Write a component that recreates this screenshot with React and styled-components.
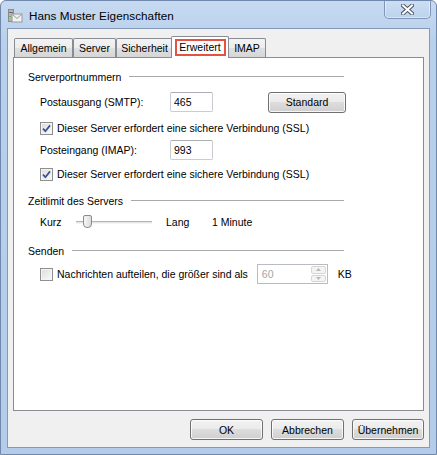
import React, { useState } from 'react'
import styled, { createGlobalStyle } from 'styled-components'

const GlobalStyle = createGlobalStyle`
  html, body { margin: 0; padding: 0; background: #ffffff; }
  body { font-family: "Liberation Sans", Arial, sans-serif; }
  * { box-sizing: border-box; }
`

const Window = styled.div`
  width: 437px;
  height: 455px;
  display: flex;
  flex-direction: column;
  border: 1px solid #7088ab;
  border-radius: 6px 6px 0 0;
  background: linear-gradient(to bottom, #c6daf1 0px, #b9d0ec 40px, #b4cce9 100%);
  overflow: hidden;
`

const TitleBar = styled.div`
  height: 27px;
  display: flex;
  align-items: flex-start;
  padding-left: 6px;
  flex-shrink: 0;
`

const TitleLeft = styled.div`
  display: flex;
  align-items: center;
  gap: 6px;
  height: 100%;
  padding-top: 2px;
`

const TitleText = styled.span`
  font-size: 11.7px;
  color: #000;
  letter-spacing: 0.05px;
`

const CloseButton = styled.div`
  margin-left: auto;
  margin-right: 5px;
  margin-top: -1px;
  width: 47px;
  height: 19px;
  border: 1px solid #7e95b7;
  border-top: none;
  border-radius: 0 0 5px 5px;
  background: linear-gradient(to bottom, #cddff3, #bcd2ec);
  box-shadow: inset 0 0 0 1px rgba(255,255,255,0.45);
  display: flex;
  align-items: center;
  justify-content: center;
`

const Client = styled.div`
  flex: 1;
  margin: 0 6px 6px;
  border: 1px solid #8499b6;
  background: #f0f0f0;
  display: flex;
  flex-direction: column;
  padding: 7px 5px 0;
`

const TabStrip = styled.div`
  height: 21px;
  display: flex;
  align-items: flex-end;
  padding-left: 1px;
`

const Tab = styled.div`
  position: relative;
  width: ${p => p.$w}px;
  height: ${p => (p.$active ? 22 : 19)}px;
  margin: ${p => (p.$active ? '0 -1px -1px -2px' : '0')};
  z-index: ${p => (p.$active ? 2 : 1)};
  border: 1px solid #898c95;
  border-bottom: ${p => (p.$active ? 'none' : '0')};
  border-radius: 2px 2px 0 0;
  background: ${p => (p.$active ? '#ffffff' : 'linear-gradient(to bottom, #f3f3f3 0%, #ececec 50%, #e0e0e0 51%, #d6d6d6 100%)')};
  font-size: 10.5px;
  color: #000;
  display: flex;
  align-items: center;
  justify-content: center;
  padding-bottom: ${p => (p.$active ? 2 : 0)}px;
`

const Highlight = styled.span`
  width: 51px;
  height: 17px;
  margin-top: 1px;
  border: 2px solid #e8513f;
  display: flex;
  align-items: center;
  justify-content: center;
`

const Panel = styled.div`
  flex: 1;
  background: #ffffff;
  border: 1px solid #898c95;
  padding: 12px 79px 0 14px;
  display: flex;
  flex-direction: column;
`

const GroupHeader = styled.div`
  height: 14px;
  display: flex;
  align-items: center;
  gap: 8px;
  font-size: 10.5px;
  margin-top: ${p => p.$mt || 0}px;
  &::after {
    content: '';
    flex: 1;
    height: 1px;
    background: #a9a9a9;
    margin-top: -2px;
  }
`

const Row = styled.div`
  height: ${p => p.$h || 20}px;
  margin-top: ${p => p.$mt || 0}px;
  margin-left: 12px;
  display: flex;
  align-items: center;
  font-size: 10.5px;
  white-space: nowrap;
`

const Label = styled.span`
  width: ${p => p.$w}px;
  flex-shrink: 0;
`

const Unit = styled.span`
  margin-left: 10px;
  flex-shrink: 0;
`

const TextBox = styled.div`
  width: ${p => p.$w || 43}px;
  height: 20px;
  flex-shrink: 0;
  border: 1px solid #c9ccd3;
  border-top-color: #abadb3;
  border-radius: 2px;
  background: #fff;
  padding-left: 3px;
  display: flex;
  align-items: center;
  color: #000;
`

const Button = styled.div`
  width: ${p => p.$w || 73}px;
  height: ${p => p.$h || 21}px;
  flex-shrink: 0;
  margin-left: ${p => p.$ml || 0}px;
  border: 1px solid #707070;
  border-radius: 3px;
  background: linear-gradient(to bottom, #f2f2f2 0%, #ebebeb 45%, #dddddd 50%, #cfcfcf 100%);
  box-shadow: inset 0 0 0 1px rgba(255,255,255,0.8);
  display: flex;
  align-items: center;
  justify-content: center;
  font-size: 10.5px;
  color: #000;
`

const CheckRow = styled.label`
  display: flex;
  align-items: center;
  gap: 4px;
  flex-shrink: 0;
  cursor: default;
`

const Box = styled.span`
  width: 13px;
  height: 13px;
  flex-shrink: 0;
  border: 1px solid #8e8f8f;
  background: linear-gradient(135deg, #dcdcdc, #fbfbfb);
  box-shadow: inset 0 0 0 1px #f4f4f4;
  display: flex;
  align-items: center;
  justify-content: center;
`

const Track = styled.div`
  position: relative;
  width: 76px;
  height: 3px;
  flex-shrink: 0;
  margin-right: 14px;
  border-top: 1px solid #b4b4b4;
  border-bottom: 1px solid #f4f4f4;
  background: #e6e6e6;
`

const Thumb = styled.div`
  position: absolute;
  left: 7px;
  top: -7px;
  width: 9px;
  height: 13px;
  border: 1px solid #8a8a8a;
  border-radius: 2px 2px 4px 4px;
  background: linear-gradient(to right, #f6f6f6, #dcdcdc);
`

const Spin = styled.div`
  width: 71px;
  height: 20px;
  flex-shrink: 0;
  margin-left: 9px;
  border: 1px solid #b9bcc2;
  background: #fff;
  display: flex;
  align-items: stretch;
`

const SpinValue = styled.span`
  flex: 1;
  padding-left: 4px;
  display: flex;
  align-items: center;
  color: #a5a5a5;
`

const SpinButtons = styled.div`
  width: 17px;
  display: flex;
  flex-direction: column;
  padding: 1px;
  gap: 1px;
`

const SpinBtn = styled.div`
  flex: 1;
  border: 1px solid #d6d6d6;
  border-radius: 2px;
  background: #f4f4f4;
  display: flex;
  align-items: center;
  justify-content: center;
`

const Footer = styled.div`
  display: flex;
  justify-content: flex-end;
  gap: 8px;
  padding: 8px 0 7px;
`

const Check = ({ checked, onChange, children }) => (
  <CheckRow onClick={onChange}>
    <Box>
      {checked && (
        <svg width="9" height="9" viewBox="0 0 9 9">
          <path d="M1 4.6 L3.4 7.2 L8 1.4" fill="none" stroke="#3a5390" strokeWidth="1.7" />
        </svg>
      )}
    </Box>
    {children}
  </CheckRow>
)

const WinIcon = () => (
  <svg width="16" height="16" viewBox="0 0 16 16">
    <rect x="1" y="1" width="6" height="13" fill="#8c8c8c" />
    <rect x="2" y="2" width="4" height="11" fill="#b5b5b5" />
    <rect x="2" y="4" width="4" height="1" fill="#6a6a6a" />
    <rect x="2" y="8" width="2" height="1" fill="#4fc04f" />
    <rect x="5" y="6" width="10" height="8" fill="#f1f1f1" stroke="#9a9a9a" />
    <path d="M5.5 6.5 L10 10.5 L14.5 6.5" fill="none" stroke="#9a9a9a" />
  </svg>
)

const CloseGlyph = () => (
  <svg width="13" height="11" viewBox="0 0 13 11">
    <path d="M2 1.5 L11 9.5 M11 1.5 L2 9.5" stroke="#4d5767" strokeWidth="4" strokeLinecap="square" />
    <path d="M2 1.5 L11 9.5 M11 1.5 L2 9.5" stroke="#ffffff" strokeWidth="2" strokeLinecap="square" />
  </svg>
)

const Arrow = ({ up }) => (
  <svg width="5" height="3" viewBox="0 0 5 3">
    <path d={up ? 'M0 3 L2.5 0 L5 3 Z' : 'M0 0 L2.5 3 L5 0 Z'} fill="#b8b8b8" />
  </svg>
)

const tabs = [
  { label: 'Allgemein', w: 59 },
  { label: 'Server', w: 43 },
  { label: 'Sicherheit', w: 57 },
  { label: 'Erweitert', w: 58, active: true },
  { label: 'IMAP', w: 38 },
]

const App = () => {
  const [ssl1, setSsl1] = useState(true)
  const [ssl2, setSsl2] = useState(true)
  const [split, setSplit] = useState(false)

  return (
    <>
      <GlobalStyle />
      <Window>
        <TitleBar>
          <TitleLeft>
            <WinIcon />
            <TitleText>Hans Muster Eigenschaften</TitleText>
          </TitleLeft>
          <CloseButton><CloseGlyph /></CloseButton>
        </TitleBar>
        <Client>
          <TabStrip>
            {tabs.map(t => (
              <Tab key={t.label} $w={t.w} $active={t.active}>
                {t.active ? <Highlight>{t.label}</Highlight> : t.label}
              </Tab>
            ))}
          </TabStrip>
          <Panel>
            <GroupHeader>Serverportnummern</GroupHeader>
            <Row $h={22} $mt={7}>
              <Label $w={130}>Postausgang (SMTP):</Label>
              <TextBox>465</TextBox>
              <Button $w={78} $ml={55}>Standard</Button>
            </Row>
            <Row $h={14} $mt={8}>
              <Check checked={ssl1} onChange={() => setSsl1(!ssl1)}>
                Dieser Server erfordert eine sichere Verbindung (SSL)
              </Check>
            </Row>
            <Row $mt={5}>
              <Label $w={130}>Posteingang (IMAP):</Label>
              <TextBox>993</TextBox>
            </Row>
            <Row $h={14} $mt={7}>
              <Check checked={ssl2} onChange={() => setSsl2(!ssl2)}>
                Dieser Server erfordert eine sichere Verbindung (SSL)
              </Check>
            </Row>
            <GroupHeader $mt={13}>Zeitlimit des Servers</GroupHeader>
            <Row $h={16} $mt={6}>
              <Label $w={36}>Kurz</Label>
              <Track><Thumb /></Track>
              <Label $w={46}>Lang</Label>
              <span>1 Minute</span>
            </Row>
            <GroupHeader $mt={14}>Senden</GroupHeader>
            <Row $mt={6}>
              <Check checked={split} onChange={() => setSplit(!split)}>
                Nachrichten aufteilen, die größer sind als
              </Check>
              <Spin>
                <SpinValue>60</SpinValue>
                <SpinButtons>
                  <SpinBtn><Arrow up /></SpinBtn>
                  <SpinBtn><Arrow /></SpinBtn>
                </SpinButtons>
              </Spin>
              <Unit>KB</Unit>
            </Row>
          </Panel>
          <Footer>
            <Button>OK</Button>
            <Button>Abbrechen</Button>
            <Button $w={72}>Übernehmen</Button>
          </Footer>
        </Client>
      </Window>
    </>
  )
}

export default App
